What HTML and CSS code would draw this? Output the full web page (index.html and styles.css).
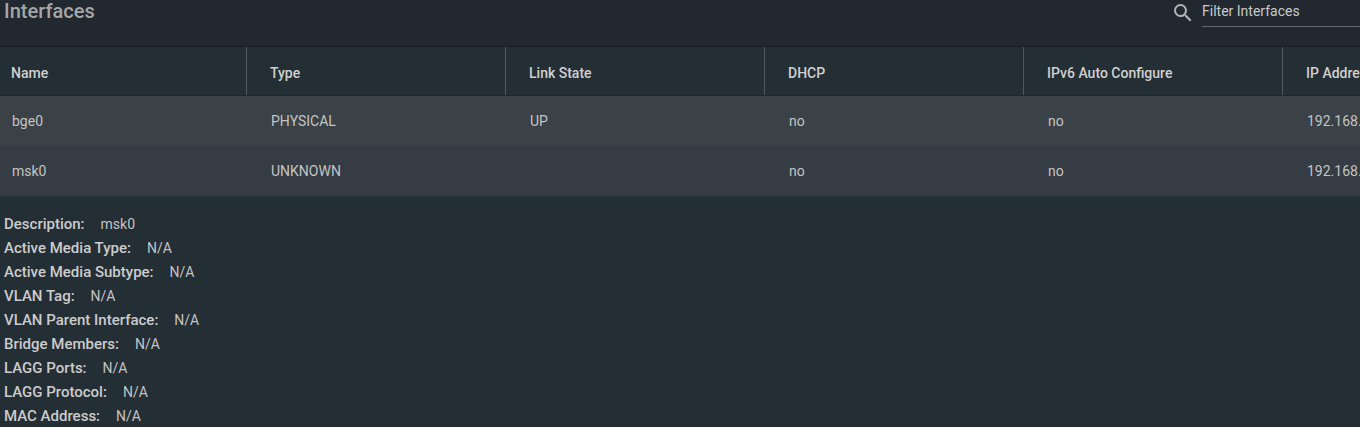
FILE: index.html
```html
<!DOCTYPE html>
<html lang="en">
<head>
    <meta charset="UTF-8">
    <meta name="viewport" content="width=device-width, initial-scale=1.0">
    <title>Interfaces</title>
    <link rel="stylesheet" href="styles.css">
</head>
<body>
    <header class="toolbar">
        <h1>Interfaces</h1>
        <div class="search">
            <label for="filter" aria-label="Filter Interfaces">
                <svg class="search-icon" viewBox="0 0 24 24">
                    <path d="M15.5 14h-.79l-.28-.27A6.471 6.471 0 0 0 16 9.5 6.5 6.5 0 1 0 9.5 16c1.61 0 3.09-.59 4.23-1.57l.27.28v.79l5 4.99L20.49 19l-4.99-5zm-6 0C7.01 14 5 11.99 5 9.5S7.01 5 9.5 5 14 7.01 14 9.5 11.99 14 9.5 14z"/>
                </svg>
            </label>
            <input type="text" id="filter" name="filter" placeholder="Filter Interfaces">
        </div>
    </header>

    <div class="table-container">
        <table>
            <colgroup>
                <col class="name-col">
                <col span="5" class="data-col">
            </colgroup>
            <thead>
                <tr>
                    <th>Name</th>
                    <th>Type</th>
                    <th>Link State</th>
                    <th>DHCP</th>
                    <th>IPv6 Auto Configure</th>
                    <th>IP Addresses</th>
                </tr>
            </thead>
            <tbody>
                <tr class="row">
                    <td>bge0</td>
                    <td>PHYSICAL</td>
                    <td>UP</td>
                    <td>no</td>
                    <td>no</td>
                    <td>192.168.</td>
                </tr>
                <tr class="row row-open">
                    <td>msk0</td>
                    <td>UNKNOWN</td>
                    <td></td>
                    <td>no</td>
                    <td>no</td>
                    <td>192.168.</td>
                </tr>
                <tr class="details">
                    <td colspan="6">
                        <dl>
                            <div><dt>Description:</dt><dd>msk0</dd></div>
                            <div><dt>Active Media Type:</dt><dd>N/A</dd></div>
                            <div><dt>Active Media Subtype:</dt><dd>N/A</dd></div>
                            <div><dt>VLAN Tag:</dt><dd>N/A</dd></div>
                            <div><dt>VLAN Parent Interface:</dt><dd>N/A</dd></div>
                            <div><dt>Bridge Members:</dt><dd>N/A</dd></div>
                            <div><dt>LAGG Ports:</dt><dd>N/A</dd></div>
                            <div><dt>LAGG Protocol:</dt><dd>N/A</dd></div>
                            <div><dt>MAC Address:</dt><dd>N/A</dd></div>
                        </dl>
                    </td>
                </tr>
            </tbody>
        </table>
    </div>
</body>
</html>
```
FILE: styles.css
```css
body {
    margin: 0;
    font-family: Roboto, sans-serif;
    font-size: 14px;
    color: #c4c4c4;
    background-color: #212830;
    overflow-x: hidden;
}

.toolbar {
    display: flex;
    justify-content: space-between;
    align-items: flex-start;
    height: 46px;
    padding-left: 4px;
    border-bottom: 1px solid #191f26;
}

h1 {
    margin: 0;
    font-size: 20px;
    font-weight: 500;
    line-height: 22px;
    color: #a6a6a6;
}

.search {
    display: flex;
}

.search-icon {
    display: block;
    width: 24px;
    height: 24px;
    margin-right: 7px;
    padding-top: 1px;
    fill: #b4b4b4;
}

.search input {
    width: 158px;
    height: 27px;
    padding: 0 0 4px;
    box-sizing: border-box;
    border: none;
    border-bottom: 1px solid #64696e;
    border-radius: 0;
    outline: none;
    background: none;
    font: inherit;
    color: #c8c8c8;
}

.search input::placeholder {
    color: #c8c8c8;
    opacity: 1;
}

.table-container {
    overflow: hidden;
}

table {
    width: 100%;
    min-width: 1542px;
    table-layout: fixed;
    border-collapse: separate;
    border-spacing: 0;
    background-color: #242e35;
}

.name-col {
    width: 247px;
}

.data-col {
    width: 259px;
}

th, td {
    box-sizing: border-box;
    padding: 0 24px;
    text-align: left;
    white-space: nowrap;
}

th {
    height: 48px;
    padding: 4px 23px 0;
    font-weight: 500;
    color: #d0d0d0;
    border-right: 1px solid #50585e;
}

th:first-child {
    padding-left: 11px;
}

td:first-child {
    padding-left: 12px;
}

.row td {
    height: 50px;
    background-color: #3a4147;
    border-top: 1px solid #20272e;
}

.row-open td {
    height: 51px;
    background-color: #363c43;
    border-top-color: #383d43;
    border-bottom: 1px solid #31383f;
}

.details td {
    padding: 16px 4px 0;
    border-bottom: 1px solid #1d242b;
}

.details td:first-child {
    padding-left: 4px;
}

dl {
    margin: 0;
}

dl div {
    display: flex;
    gap: 16px;
    line-height: 24px;
}

dt {
    font-size: 15px;
    font-weight: 500;
    color: #cccccc;
}

dd {
    margin: 0;
}
```
